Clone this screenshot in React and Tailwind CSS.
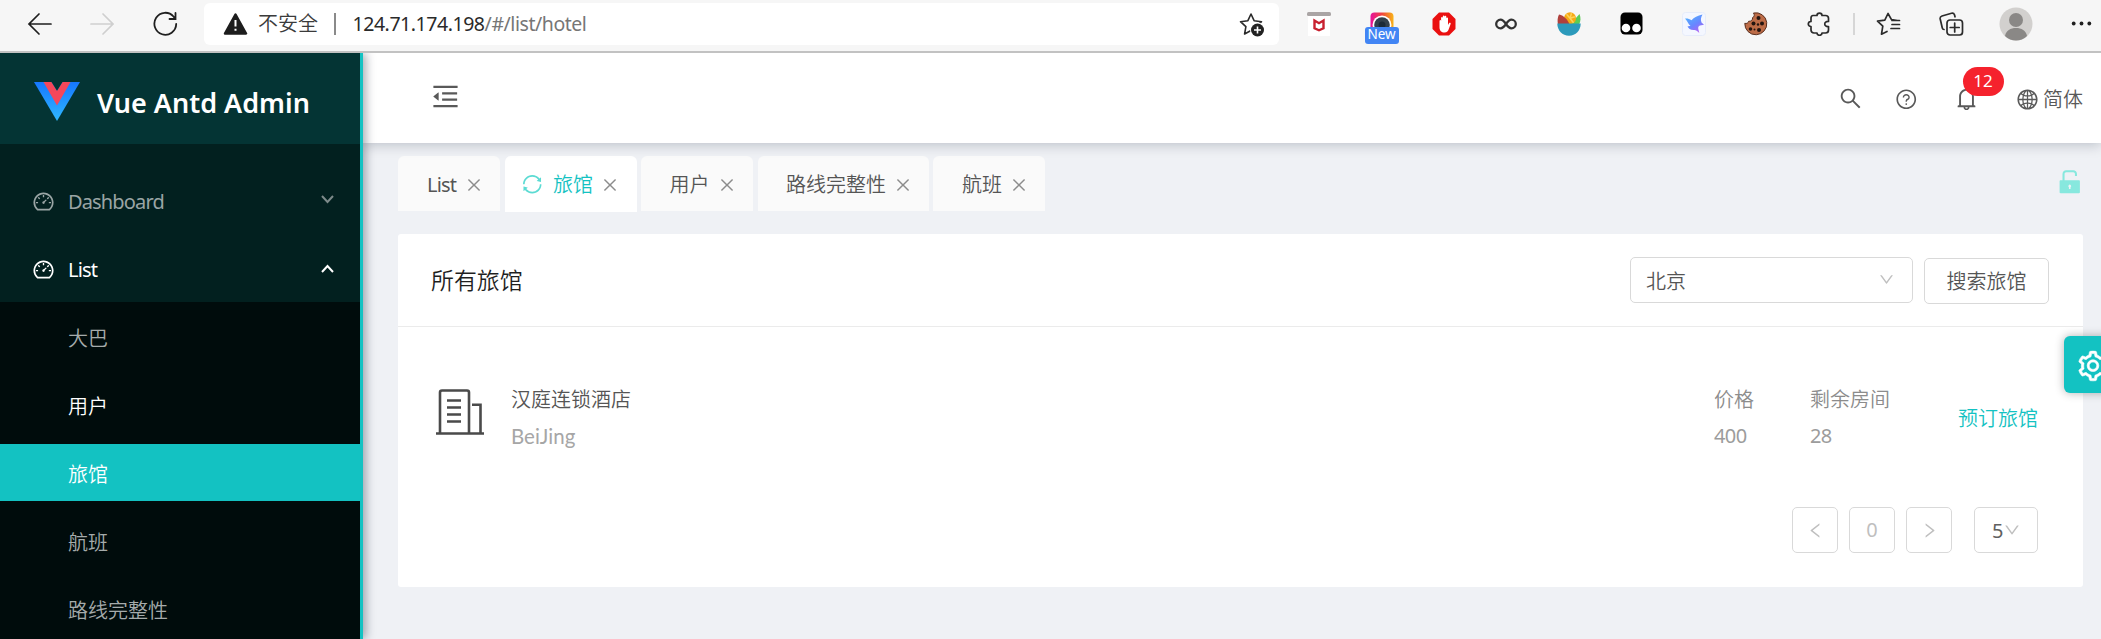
import React from 'react';
import {
  AiOutlineDashboard, AiOutlineMenuFold, AiOutlineSearch, AiOutlineQuestionCircle, AiOutlineBell,
  AiOutlineGlobal, AiFillUnlock, AiOutlineSync, AiOutlineClose, AiOutlineDown,
  AiOutlineLeft, AiOutlineRight, AiOutlineSetting,
} from 'react-icons/ai';

function Slot({ children }) {
  return <div className="flex w-[62.4px] shrink-0 items-center justify-center">{children}</div>;
}

function Toolbar() {
  return (
    <div className="flex h-[53px] w-full shrink-0 items-start border-b-2 border-[#c2c2c2] bg-[#f6f6f6]">
      <div className="flex h-[47px] w-[204px] shrink-0 items-center">
        <svg className="ml-[27px]" width="25" height="24" viewBox="0 0 25 24" fill="none" stroke="#1f1f1f" strokeWidth="1.7" strokeLinecap="round">
          <path d="M24 12H2M12 2 2 12l10 10" />
        </svg>
        <svg className="ml-[38px]" width="25" height="24" viewBox="0 0 25 24" fill="none" stroke="#cfcfcf" strokeWidth="1.7" strokeLinecap="round">
          <path d="M1 12h22M13 2l10 10-10 10" />
        </svg>
        <svg className="ml-[38px]" width="25" height="26" viewBox="0 0 25 26" fill="none" stroke="#1f1f1f" strokeWidth="1.8" strokeLinecap="round">
          <path d="M23.200 13A10.900 11 0 1 1 20.500 5.500L22 7.500M22.500 2v6h-6" />
        </svg>
      </div>
      <div className="mt-[3px] flex h-[42px] w-[1075px] shrink-0 items-center rounded-md bg-white">
        <svg className="ml-[19px]" width="25" height="22" viewBox="0 0 25 22">
          <path d="M12.500 1.500 23 20.500H2Z" fill="#1d1d1d" stroke="#1d1d1d" strokeWidth="2.500" strokeLinejoin="round" />
          <path d="M12.500 7v6.500M12.500 15.800v2" stroke="#fff" strokeWidth="2" />
        </svg>
        <span className="ml-[10px] w-[76px] text-[20px] text-[#3b3b3b]">不安全</span>
        <span className="h-[22px] w-[1.500px] bg-[#8a8a8a]" />
        <span className="ml-[17px] w-[861px] whitespace-nowrap text-[19.500px] font-normal tracking-[-0.45px] text-[#767676]">
          <span className="text-[#2a2a2a]">124.71.174.198</span>/#/list/hotel
        </span>
        <svg className="ml-[25px] shrink-0" width="26" height="25" viewBox="0 0 26 25">
          <path d="M12 2l3.100 6.700 7.400 1-5.400 5 1.300 7.300L12 18.500 5.600 22l1.300-7.300L1.500 9.700l7.400-1Z" fill="none" stroke="#2a2a2a" strokeWidth="1.600" strokeLinejoin="round" />
          <circle cx="18.500" cy="18" r="7.500" fill="#fff" />
          <circle cx="18.500" cy="18" r="6.500" fill="#222" />
          <path d="M15 18h7M18.500 14.500v7" stroke="#fff" strokeWidth="1.600" />
        </svg>
      </div>
      <div className="ml-[9px] flex h-[47px] shrink-0 items-center">
        <Slot>
          <svg width="24" height="24" viewBox="0 0 24 24">
            <rect x="1" y="3" width="22" height="21" fill="#fff" />
            <rect x="0" y="0" width="24" height="4" rx="1.500" fill="#aaa5a5" />
            <path d="M7.500 8.500v7.800l4.500 2 4.500-2V8.500L12 11.200Z" fill="none" stroke="#c8202f" strokeWidth="2.400" />
          </svg>
        </Slot>
        <Slot>
          <div className="relative h-6 w-6">
            <svg width="24" height="24" viewBox="0 0 24 24">
              <defs>
                <linearGradient id="cam" x1="0" x2="1" y1="0" y2="0">
                  <stop offset="0" stopColor="#e6109c" />
                  <stop offset="0.500" stopColor="#f0453c" />
                  <stop offset="1" stopColor="#f8b418" />
                </linearGradient>
              </defs>
              <rect x="0.500" y="0.500" width="23" height="23" rx="4" fill="url(#cam)" />
              <circle cx="12" cy="13" r="9.500" fill="#fff" />
              <circle cx="12" cy="13" r="7.800" fill="#33404c" />
              <circle cx="12" cy="13" r="3.500" fill="#1c2a38" />
            </svg>
            <span className="absolute top-[15px] left-[-5px] flex h-[17px] w-[34px] items-center justify-center rounded-[3px] bg-[#4285f4] text-[13.500px] leading-none font-normal text-white">New</span>
          </div>
        </Slot>
        <Slot>
          <svg width="24" height="24" viewBox="0 0 24 24">
            <path d="M7 .5h10L23.500 7v10L17 23.500H7L.5 17V7Z" fill="#ea1010" />
            <path d="M7.500 9v6.500c0 3 2 5 5 5 2.500 0 3.700-1.500 4.500-4l1.700-4.700c.3-1-1.200-1.500-1.700-.6L16 13V6.300c0-1.200-1.700-1.200-1.700 0V4.800c0-1.300-1.800-1.300-1.800 0v-.4c0-1.300-1.700-1.300-1.700 0V6c0-1.200-1.700-1.200-1.700 0v3c0-1.200-1.600-1.200-1.600 0Z" fill="#fff" />
          </svg>
        </Slot>
        <Slot>
          <svg width="22" height="12" viewBox="0 0 22 12" fill="none" stroke="#333" strokeWidth="2.300">
            <path d="M11 6C9 3 7.500 1.700 5.500 1.700a4.300 4.300 0 0 0 0 8.600C7.500 10.300 9 9 11 6s3.500-4.300 5.500-4.300a4.300 4.300 0 0 1 0 8.600C14.500 10.300 13 9 11 6Z" />
          </svg>
        </Slot>
        <Slot>
          <svg width="24" height="24" viewBox="0 0 24 24">
            <path d="M22.500 2c1.500 3.500 1.300 7.500-.5 10.500h-9Z" fill="#5ccc55" />
            <circle cx="13" cy="6.300" r="6" fill="#f6a914" />
            <path d="M13 6.300 9.500 2.200M13 6.300l1.500-5M13 6.300l4.800-1.500M13 6.300l3.500 4.500" stroke="#fdd25a" strokeWidth="1.500" />
            <path d="M2 2.500c5 1 9 5.500 10.500 10H1C.2 9 .5 5.500 2 2.500Z" fill="#b0413c" />
            <path d="M.3 11.500h23.400c0 7-5 12.200-11.700 12.200S.3 18.500.3 11.500Z" fill="#2c9abb" />
          </svg>
        </Slot>
        <Slot>
          <svg width="23" height="23" viewBox="0 0 23 23">
            <rect x="0.500" y="0.500" width="22" height="22" rx="4.500" fill="#000" />
            <circle cx="6" cy="16" r="4.300" fill="#fff" />
            <circle cx="16.500" cy="16" r="4.300" fill="#fff" />
          </svg>
        </Slot>
        <Slot>
          <svg width="24" height="24" viewBox="0 0 24 24">
            <defs>
              <linearGradient id="bird" x1="0.200" x2="0.800" y1="0" y2="1">
                <stop offset="0" stopColor="#4fb4ff" />
                <stop offset="0.550" stopColor="#6a85ff" />
                <stop offset="1" stopColor="#c05cf0" />
              </linearGradient>
            </defs>
            <rect x="0.500" y="0.500" width="23" height="23" rx="3" fill="#f4f7ff" stroke="#e6ecfa" />
            <path d="M3 6.500c2.500-.2 4.500.3 6.500 1.800C12 5.500 15.500 3.500 20.500 2.500c-1.800 3-2 5.500-1 8l2.500 2.300-4 .7c-1.500.5-2 1.800-1.700 3.500l1 4c-2-2.200-3.800-3.200-5.300-3-3.500.2-5.500-1.500-6.500-3.500l3-.8C6.300 12.500 5.500 9 3 6.500Z" fill="url(#bird)" />
          </svg>
        </Slot>
        <Slot>
          <svg width="24" height="24" viewBox="0 0 24 24">
            <path d="M9.500 1a11 11 0 1 1-8.700 10.300c1.700.6 3.500-.2 3.800-2C7 9.500 9 8 8.600 5.500 10.500 5 10.700 2.500 9.500 1Z" fill="#bd6c47" stroke="#5a3020" strokeWidth="1" />
            <g fill="#241510">
              <circle cx="14.500" cy="6" r="2" /><circle cx="9.500" cy="11.500" r="2" /><circle cx="18" cy="11.500" r="2" />
              <circle cx="14" cy="12.500" r="1.200" /><circle cx="6.500" cy="17" r="1.800" /><circle cx="15" cy="18" r="2" /><circle cx="10.500" cy="17.500" r="1" />
            </g>
          </svg>
        </Slot>
        <Slot>
          <svg className="ml-[2px]" width="24" height="24" viewBox="0 0 24 24" fill="none" stroke="#2b2b2b" strokeWidth="1.700" strokeLinejoin="round">
            <path d="M6 3.500h4C10 .2 15 .2 15 3.500h3.500c1.500 0 3 1 3 2.800V9.500c-5-.5-5 5.500 0 5v3.500c0 1.500-1.200 3-3 3H15c0 3-5 3-5 0H7c-1.800 0-3-1.300-3-3v-3.500c-3.600 0-3.600-5 0-5V6c0-1.500.8-2.500 2-2.500Z" />
          </svg>
        </Slot>
        <span className="ml-[3px] h-[22px] w-[2px] bg-[#d6d6d6]" />
        <span className="w-[3px]" />
        <Slot>
          <svg width="25" height="24" viewBox="0 0 25 24" fill="none" stroke="#2b2b2b" strokeWidth="1.700" strokeLinecap="round" strokeLinejoin="round">
            <path d="M21.500 8.500l-6-.8L12 1.500 8.800 8.200l-7.300 1 5.300 5-1.300 8 5.500-2.700M16 12.500h7.500M16 8.500h7.500M15 16.500h8.500" />
          </svg>
        </Slot>
        <Slot>
          <svg width="25" height="24" viewBox="0 0 25 24" fill="none" stroke="#2b2b2b" strokeWidth="1.700" strokeLinecap="round" strokeLinejoin="round">
            <path d="M5 17.500c-1 0-1.500-.7-1.700-1.500L1.200 7c-.3-1.500.3-2.500 1.800-3L12.500 1.300c1.500-.4 2.500.2 3 1.500l.5 2" />
            <rect x="8" y="8" width="15.500" height="15" rx="3" />
            <path d="M15.700 11v9M11.200 15.500h9" />
          </svg>
        </Slot>
        <svg className="mt-[1px] ml-[16.500px] shrink-0" width="34" height="34" viewBox="0 0 34 34">
          <circle cx="17" cy="17" r="16.500" fill="#d2d0ce" />
          <circle cx="17" cy="13" r="7" fill="#8a8886" />
          <path d="M6 29c1-5.500 5.500-8 11-8s10 2.500 11 8c-3 3-7 4.500-11 4.500S9 32 6 29Z" fill="#8a8886" />
        </svg>
        <svg className="ml-[38px] shrink-0" width="21" height="5" viewBox="0 0 21 5" fill="#1f1f1f">
          <circle cx="2.700" cy="2.500" r="1.900" /><circle cx="10.500" cy="2.500" r="1.900" /><circle cx="18.300" cy="2.500" r="1.900" />
        </svg>
      </div>
    </div>
  );
}

function Arrow({ up, className }) {
  return (
    <svg className={className} width="13" height="9" viewBox="0 0 13 9" fill="none" stroke="currentColor" strokeWidth="2">
      <path d={up ? 'M1 8l5.500-6L12 8' : 'M1 1l5.500 6L12 1'} />
    </svg>
  );
}

function SubItem({ label, state }) {
  const tone =
    state === 'active' ? 'bg-[#13c2c2] text-white' : state === 'hover' ? 'text-white' : 'text-[#a5abab]';
  return <div className={`mt-[5px] mb-[6px] flex h-[57px] w-[363px] shrink-0 items-center pt-[5px] pl-[68px] ${tone}`}>{label}</div>;
}

function Sidebar() {
  return (
    <div className="relative z-20 flex w-[363px] shrink-0 flex-col bg-[#13c2c2] text-[20px] shadow-[3px_0_9px_rgba(0,21,41,0.35)]">
      <div className="flex h-[91px] w-[360px] shrink-0 items-center bg-[#043434]">
        <svg className="ml-[34px] mt-[6px]" width="46" height="39" viewBox="0 0 46 40" preserveAspectRatio="none">
          <defs>
            <linearGradient id="vb" x1="0" x2="0" y1="0" y2="1">
              <stop offset="0" stopColor="#1677ff" />
              <stop offset="1" stopColor="#2fb8ff" />
            </linearGradient>
          </defs>
          <path d="M0 0h46L23 40Z" fill="url(#vb)" />
          <path d="M9.500 0H17.500l5.500 9 5.500-9h8L23 24Z" fill="#f5475a" />
          <path d="M17.500 0h11L23 9Z" fill="#043434" />
        </svg>
        <span className="mt-[10px] ml-[17px] whitespace-nowrap text-[27px] font-semibold text-white">Vue Antd Admin</span>
      </div>
      <div className="flex h-[158px] w-[360px] shrink-0 flex-col bg-[#02201f] pt-[24px]">
        <div className="flex h-[68px] items-center text-[#9aa5a5]">
          <AiOutlineDashboard className="ml-[32px] text-[23px]" />
          <span className="ml-[13px] w-[253px] font-normal tracking-[-0.85px]">Dashboard</span>
          <Arrow className="mt-[-5px] text-[#7d8a8a]" />
        </div>
        <div className="flex h-[68px] items-center text-white">
          <AiOutlineDashboard className="ml-[32px] mt-[2px] text-[23px]" />
          <span className="mt-[2px] ml-[13px] w-[253px] font-normal tracking-[-0.85px]">List</span>
          <Arrow up className="mt-[-1px]" />
        </div>
      </div>
      <div className="flex w-[360px] flex-1 flex-col overflow-visible bg-[#000c0c] pt-px">
        <SubItem label="大巴" />
        <SubItem label="用户" state="hover" />
        <SubItem label="旅馆" state="active" />
        <SubItem label="航班" />
        <SubItem label="路线完整性" />
      </div>
    </div>
  );
}

function Header() {
  return (
    <div className="relative z-10 flex h-[90px] shrink-0 items-center bg-white text-[#595959] shadow-[0_2px_12px_rgba(0,21,41,0.22)]">
      <AiOutlineMenuFold className="mt-[-4px] ml-[67px] shrink-0 text-[31px]" />
      <div className="flex-1" />
      <AiOutlineSearch className="text-[25px]" />
      <AiOutlineQuestionCircle className="mt-[3px] ml-[32px] text-[22.500px]" />
      <div className="relative mt-[1px] ml-[36px]">
        <AiOutlineBell className="text-[27px]" />
        <span className="absolute top-[-18.500px] left-[9.500px] flex h-[29px] w-[41px] items-center justify-center rounded-full bg-[#f5222d] text-[17px] font-normal text-white">12</span>
      </div>
      <AiOutlineGlobal className="mt-[3px] ml-[36px] text-[23px]" />
      <span className="mt-[4px] mr-[18px] ml-[4px] text-[20px]">简体</span>
    </div>
  );
}

const TABS = [
  { label: 'List', box: 'w-[102px] pl-[29px] font-normal tracking-[-0.85px]', gap: 'ml-[9px]' },
  { label: '旅馆', box: 'w-[132px] pl-[16px]', gap: 'ml-[8px]', active: true },
  { label: '用户', box: 'w-[112px] pl-[28.500px]', gap: 'ml-[8px]' },
  { label: '路线完整性', box: 'w-[171px] pl-[28.500px]', gap: 'ml-[8px]' },
  { label: '航班', box: 'w-[112px] pl-[29px]', gap: 'ml-[8px]' },
];

function Tabs() {
  return (
    <div className="flex h-[56px] items-start gap-[4.500px] text-[20px]">
      {TABS.map((t) => (
        <div
          key={t.label}
          className={`flex shrink-0 items-center rounded-t-md pt-[2px] ${t.box} ${t.active ? 'h-[56px] bg-white text-[#13c2c2]' : 'h-[55px] bg-[#fafafa] text-[#555]'}`}
        >
          {t.active && <AiOutlineSync className="mt-[-2px] mr-[10px] text-[22.500px] text-[#5cdbd3]" />}
          <span className="whitespace-nowrap">{t.label}</span>
          <AiOutlineClose className={`shrink-0 text-[18px] text-[#8c8c8c] ${t.gap}`} />
        </div>
      ))}
      <AiFillUnlock className="mt-[11px] mr-[-1.500px] ml-auto text-[29.500px] text-[#87e8de]" />
    </div>
  );
}

function PageBox({ children }) {
  return <div className="flex h-[46px] w-[46px] items-center justify-center rounded-[5px] border border-[#d9d9d9] text-[#bfbfbf]">{children}</div>;
}

function Card() {
  return (
    <div className="mt-[22px] flex h-[353px] w-[1685px] flex-col rounded-[3px] bg-white text-[20px]">
      <div className="flex h-[93px] shrink-0 items-center border-b border-[#ebebeb] pr-[34px] pl-[33px]">
        <span className="flex-1 pt-[3px] text-[22.900px] text-[#1f1f1f]">所有旅馆</span>
        <div className="flex h-[46px] w-[283px] items-center rounded-[5px] border border-[#d9d9d9] pr-[17px] pl-[15px] text-[#555]">
          <span className="flex-1 pt-[4px]">北京</span>
          <AiOutlineDown className="mt-[-2px] text-[17px] text-[#bfbfbf]" />
        </div>
        <div className="mt-[2px] ml-[11px] flex h-[46px] w-[125px] items-center justify-center rounded-[5px] border border-[#d9d9d9] pt-[2px] text-[#555]">搜索旅馆</div>
      </div>
      <div className="flex h-[165px] shrink-0 pt-[54px] pr-[45px] pl-[38px]">
        <svg className="mt-[8px] shrink-0" width="48" height="46" viewBox="0 0 48 46" fill="none" stroke="#4a4a4a" strokeWidth="2.600">
          <path d="M0 44.500h48M4 44V3.500C4 2.200 4.800 1.500 6 1.500h25c1.200 0 2 .7 2 2V44M36 15.700h8.500V44" />
          <path d="M11 11.500h14M11 18.500h14M11 25.500h14M11 32.500h14" />
        </svg>
        <div className="ml-[27px] flex flex-1 flex-col leading-[37px]">
          <span className="text-[#555]">汉庭连锁酒店</span>
          <span className="font-['Lato','Noto_Sans',sans-serif] text-[20.500px] font-normal text-[#a6a6a6]">BeiJing</span>
        </div>
        <div className="flex w-[96px] flex-col leading-[37px] text-[#8c8c8c]">
          <span>价格</span>
          <span className="mt-[-1px] font-normal tracking-[-0.6px] text-[#9c9c9c]">400</span>
        </div>
        <div className="flex w-[148px] flex-col leading-[37px] text-[#8c8c8c]">
          <span>剩余房间</span>
          <span className="mt-[-1px] font-normal tracking-[-0.6px] text-[#9c9c9c]">28</span>
        </div>
        <span className="mt-[19px] leading-[37px] whitespace-nowrap text-[#13c2c2]">预订旅馆</span>
      </div>
      <div className="mt-[15px] flex items-center justify-end gap-[11px] pr-[45px]">
        <PageBox><AiOutlineLeft className="text-[19px]" /></PageBox>
        <PageBox><span className="font-normal">0</span></PageBox>
        <PageBox><AiOutlineRight className="text-[19px]" /></PageBox>
        <div className="ml-[11px] flex h-[46px] w-[64px] items-center rounded-[5px] border border-[#d9d9d9] pl-[17px] text-[#606060]">
          <span className="w-[11px] pt-[1px] font-normal tracking-[-1px]">5</span>
          <AiOutlineDown className="text-[18px] text-[#bfbfbf]" />
        </div>
      </div>
    </div>
  );
}

export default function App() {
  return (
    <div className="relative flex h-[639px] w-[2101px] flex-col overflow-hidden bg-[#f0f2f5] font-['Noto_Sans','Noto_Sans_CJK_SC',sans-serif] font-[350]">
      <Toolbar />
      <div className="flex min-h-0 flex-1 overflow-hidden">
        <Sidebar />
        <div className="flex min-w-0 flex-1 flex-col bg-[#eff1f5]">
          <Header />
          <div className="flex flex-col pt-[13px] pr-[18px] pl-[35px]">
            <Tabs />
            <Card />
          </div>
        </div>
      </div>
      <div className="absolute top-[336px] left-[2064px] z-30 flex h-[57px] w-[57px] items-center rounded-l-md bg-[#13c2c2] pl-[12px] text-white shadow-[0_0_10px_rgba(0,0,0,0.3)]">
        <AiOutlineSetting className="mt-[2px] shrink-0 text-[34px]" stroke="#fff" strokeWidth="18" />
      </div>
    </div>
  );
}
